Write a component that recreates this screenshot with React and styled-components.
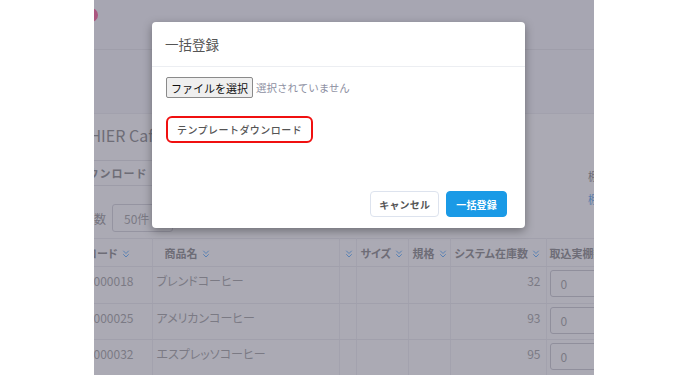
import React from "react"
import styled, { createGlobalStyle } from "styled-components"
import { ChevronsDown } from "lucide-react"

const GlobalStyle = createGlobalStyle`
  html, body {
    margin: 0;
    padding: 0;
    background: #fff;
  }
  body {
    font-family: "Noto Sans CJK JP", "Noto Sans", sans-serif;
  }
  * {
    box-sizing: border-box;
  }
`

const Stage = styled.div`
  width: 688px;
  height: 375px;
  display: flex;
  justify-content: center;
  background: #fff;
`

const Frame = styled.div`
  position: relative;
  width: 500px;
  height: 375px;
  overflow: hidden;
  background: #fff;
`

/* ---------- page behind the dialog ---------- */

const TopZone = styled.div`
  height: 114px;
  background: #f6f6f9;
  border-bottom: 1px solid #e8e8ee;
`

const TopBar = styled.div`
  height: 50px;
  padding-top: 8px;
  border-bottom: 1px solid #e0e0e6;
`

const Dot = styled.span`
  display: block;
  width: 14px;
  height: 14px;
  margin-left: -10px;
  border-radius: 50%;
  background: #ff2d7a;
`

const Title = styled.h1`
  margin: 0 0 0 -34px;
  height: 46px;
  line-height: 42px;
  font-size: 16px;
  font-weight: 400;
  color: #666;
  white-space: nowrap;
`

const Controls = styled.div`
  display: flex;
  justify-content: space-between;
  height: 78px;
`

const LeftCol = styled.div`
  display: flex;
  flex-direction: column;
  gap: 18px;
`

const OutlineButton = styled.div`
  height: 26px;
  margin-left: ${(p) => p.$shift}px;
  padding: 0 8px 0 10px;
  display: flex;
  align-items: center;
  border: 1px solid #dcdce2;
  border-radius: 4px;
  font-size: 11px;
  font-weight: 700;
  letter-spacing: 1px;
  color: #666;
  white-space: nowrap;
  width: max-content;
`

const CountRow = styled.div`
  display: flex;
  align-items: center;
  gap: 6px;
  margin-left: ${(p) => p.$shift}px;
  font-size: 12px;
  color: #777;
  white-space: nowrap;
`

const Select = styled.div`
  width: 61px;
  height: 28px;
  padding-left: 11px;
  display: flex;
  align-items: center;
  border: 1px solid #c8c8d0;
  border-radius: 3px;
  font-size: 12px;
  color: #888;
`

const RightCol = styled.div`
  width: 60px;
  margin-right: -54px;
  padding-top: 5px;
  font-size: 11px;
  line-height: 23px;
  white-space: nowrap;
`

const Label = styled.div`
  color: ${(p) => (p.$link ? "#2f8ee8" : "#666")};
`

const Table = styled.table`
  margin-left: -52px;
  table-layout: fixed;
  border-collapse: collapse;
  width: 604px;
`

const Th = styled.th`
  height: 28px;
  padding: 0 ${(p) => (p.$right ? "20px" : "4px")} 0 ${(p) => p.$pl || 4}px;
  text-align: ${(p) => (p.$right ? "right" : "left")};
  border-top: 1px solid #e6e6ec;
  border-bottom: 1px solid #e6e6ec;
  border-right: 1px solid #ececf0;
  font-size: 11px;
  font-weight: 700;
  color: #666;
  white-space: nowrap;
  overflow: hidden;
  font-feature-settings: "palt";
`

const Td = styled.td`
  height: 36.5px;
  padding: 5px ${(p) => (p.$right ? "5px" : "4px")} 0 ${(p) => p.$pl || 4}px;
  vertical-align: top;
  text-align: ${(p) => (p.$right ? "right" : "left")};
  border-bottom: 1px solid #e6e6ec;
  border-right: 1px solid #ececf0;
  font-size: 12px;
  color: #888;
  white-space: nowrap;
  overflow: hidden;
  font-feature-settings: "palt";
`

const CountInput = styled.div`
  width: 90px;
  height: 27px;
  margin-top: -1px;
  padding-left: 10px;
  display: flex;
  align-items: center;
  border: 1px solid #bcbcc4;
  border-radius: 3px;
  font-size: 12px;
  color: #888;
`

const Sort = styled(ChevronsDown)`
  margin-left: 2px;
  vertical-align: -2px;
  color: #1f8fff;
`

/* ---------- dialog ---------- */

const Backdrop = styled.div`
  position: absolute;
  inset: 0;
  background: rgba(115, 113, 130, 0.6);
  padding: 22px 0 0 58px;
`

const Modal = styled.div`
  width: 373px;
  background: #fff;
  border-radius: 4px;
  box-shadow: 0 3px 10px rgba(0, 0, 0, 0.35);
`

const ModalHeader = styled.div`
  height: 45px;
  padding: 0 13px;
  display: flex;
  align-items: center;
  border-bottom: 1px solid #eceef2;
  font-size: 13.5px;
  color: #555;
`

const ModalBody = styled.div`
  height: 113px;
  padding: 10px 14px 0;
`

const FileRow = styled.div`
  display: flex;
  align-items: center;
  gap: 3px;
`

const FileButton = styled.button`
  height: 21px;
  padding: 0 4px;
  border: 1px solid #8a8a8a;
  border-radius: 2px;
  background: #efefef;
  font-family: inherit;
  font-size: 11px;
  color: #111;
`

const FileName = styled.span`
  font-size: 10.5px;
  color: #8d90a2;
`

const TemplateButton = styled.button`
  margin-top: 18px;
  height: 27px;
  padding: 0 9px;
  border: 2px solid #f01010;
  border-radius: 6px;
  background: #fff;
  font-family: inherit;
  font-size: 10px;
  font-weight: 500;
  letter-spacing: 0.45px;
  color: #555;
`

const ModalFooter = styled.div`
  display: flex;
  justify-content: flex-end;
  gap: 7px;
  padding: 11px 18px 11px;
`

const ActionButton = styled.button`
  height: 26px;
  padding: 0 ${(p) => (p.$primary ? "9px" : "8px")};
  border-radius: 4px;
  border: 1px solid ${(p) => (p.$primary ? "#1a9ae6" : "#dde3ee")};
  background: ${(p) => (p.$primary ? "#1a9ae6" : "#fff")};
  color: ${(p) => (p.$primary ? "#fff" : "#555")};
  font-family: inherit;
  font-size: 10px;
  font-weight: 700;
  letter-spacing: 0.2px;
`

const rows = [
  { code: "000000018", name: "ブレンドコーヒー", stock: 32 },
  { code: "000000025", name: "アメリカンコーヒー", stock: 93 },
  { code: "000000032", name: "エスプレッソコーヒー", stock: 95 },
]

const Icon = () => <Sort size={12} strokeWidth={1.8} />

const App = () => {
  return (
    <Stage>
      <GlobalStyle />
      <Frame>
        <TopZone>
          <TopBar>
            <Dot />
          </TopBar>
        </TopZone>
        <Title>CASHIER Cafe 棚卸</Title>
        <Controls>
          <LeftCol>
            <OutlineButton $shift={-53}>CSVダウンロード</OutlineButton>
            <CountRow $shift={-36}>
              表示件数
              <Select>50件</Select>
            </CountRow>
          </LeftCol>
          <RightCol>
            <Label>棚卸日</Label>
            <Label $link>棚卸履歴</Label>
          </RightCol>
        </Controls>
        <Table>
          <colgroup>
            <col style={{ width: 110 }} />
            <col style={{ width: 187 }} />
            <col style={{ width: 17 }} />
            <col style={{ width: 52 }} />
            <col style={{ width: 42 }} />
            <col style={{ width: 96 }} />
            <col style={{ width: 100 }} />
          </colgroup>
          <thead>
            <tr>
              <Th $right>
                商品コード
                <Icon />
              </Th>
              <Th $pl={12}>
                商品名
                <Icon />
              </Th>
              <Th $pl={1}>
                <Icon />
              </Th>
              <Th>
                サイズ
                <Icon />
              </Th>
              <Th>
                規格
                <Icon />
              </Th>
              <Th>
                システム在庫数
                <Icon />
              </Th>
              <Th $pl={3}>取込実棚数</Th>
            </tr>
          </thead>
          <tbody>
            {rows.map((r) => (
              <tr key={r.code}>
                <Td $right style={{ paddingRight: 18 }}>
                  {r.code}
                </Td>
                <Td>{r.name}</Td>
                <Td />
                <Td />
                <Td />
                <Td $right>{r.stock}</Td>
                <Td $pl={3} style={{ paddingTop: 4 }}>
                  <CountInput>0</CountInput>
                </Td>
              </tr>
            ))}
          </tbody>
        </Table>

        <Backdrop>
          <Modal>
            <ModalHeader>一括登録</ModalHeader>
            <ModalBody>
              <FileRow>
                <FileButton>ファイルを選択</FileButton>
                <FileName>選択されていません</FileName>
              </FileRow>
              <TemplateButton>テンプレートダウンロード</TemplateButton>
            </ModalBody>
            <ModalFooter>
              <ActionButton>キャンセル</ActionButton>
              <ActionButton $primary>一括登録</ActionButton>
            </ModalFooter>
          </Modal>
        </Backdrop>
      </Frame>
    </Stage>
  )
}

export default App
